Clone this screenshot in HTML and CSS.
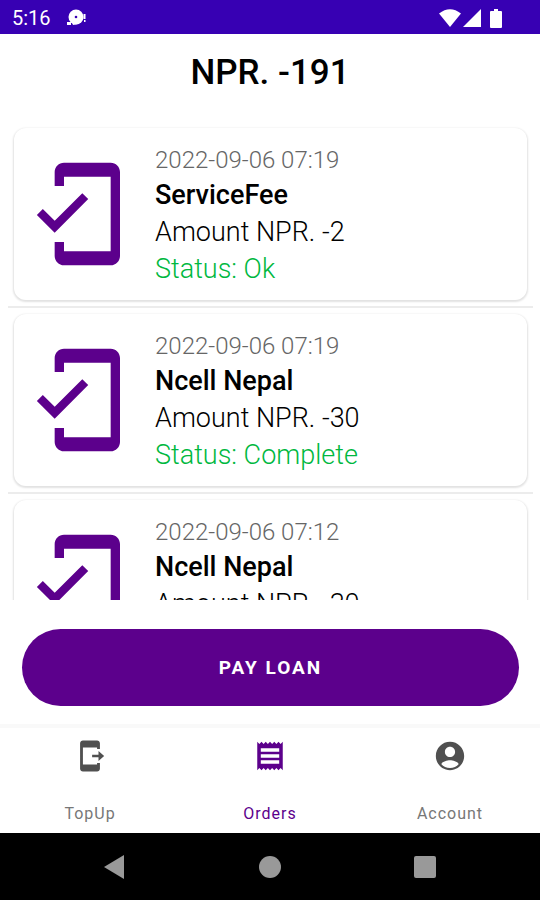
FILE: index.html
```html
<!DOCTYPE html>
<html lang="en">
<head>
<meta charset="utf-8">
<meta name="viewport" content="width=device-width, initial-scale=1">
<title>Orders</title>
<link rel="stylesheet" href="styles.css">
</head>
<body>
<svg class="defs" aria-hidden="true">
  <symbol id="phone-check" viewBox="0 0 24 24"><path d="M19 1H9c-1.100 0-2 .9-2 2v3h2V4h10v16H9v-2H7v3c0 1.100.9 2 2 2h10c1.100 0 2-.9 2-2V3c0-1.100-.9-2-2-2zM7.010 13.470l-2.550-2.550-1.270 1.270L7 16l7.190-7.190-1.270-1.270z"/></symbol>
</svg>
<div class="screen">
  <header class="status-bar">
    <time>5:16</time>
    <svg class="notice" viewBox="0 0 20 18" aria-hidden="true"><circle cx="9" cy="8" r="7.500"/><path d="M0 13h4v3H0zM4 11l2 5 5-1zM16.500 5h2v5h-2zM17 11h1.500v2H17z"/><circle class="eye" cx="9" cy="8" r="1.300"/></svg>
    <div class="signals">
      <svg width="22" height="18" viewBox="0 0 22 18" aria-hidden="true"><path d="M0 4.500Q11-4 22 4.500L11 18z"/></svg>
      <svg width="18" height="18" viewBox="0 0 18 18" aria-hidden="true"><path d="M18 0v18H0z"/></svg>
      <svg width="12" height="19" viewBox="0 0 12 19" aria-hidden="true"><path d="M4 0h4v2h3q1 0 1 1v15q0 1-1 1H1q-1 0-1-1V3q0-1 1-1h3z"/></svg>
    </div>
  </header>
  <h1>NPR. -191</h1>
  <main class="orders">
    <article class="item">
      <div class="card">
        <svg class="phone" aria-hidden="true"><use href="#phone-check"/></svg>
        <div class="info">
          <time>2022-09-06 07:19</time>
          <h2>ServiceFee</h2>
          <p>Amount NPR. -2</p>
          <p class="status">Status: Ok</p>
        </div>
      </div>
    </article>
    <article class="item">
      <div class="card">
        <svg class="phone" aria-hidden="true"><use href="#phone-check"/></svg>
        <div class="info">
          <time>2022-09-06 07:19</time>
          <h2>Ncell Nepal</h2>
          <p>Amount NPR. -30</p>
          <p class="status">Status: Complete</p>
        </div>
      </div>
    </article>
    <article class="item">
      <div class="card">
        <svg class="phone" aria-hidden="true"><use href="#phone-check"/></svg>
        <div class="info">
          <time>2022-09-06 07:12</time>
          <h2>Ncell Nepal</h2>
          <p>Amount NPR. -30</p>
        </div>
      </div>
    </article>
  </main>
  <div class="action"><button class="pay" type="button">PAY LOAN</button></div>
  <nav class="tabs">
    <a href="#topup">
      <svg viewBox="0 0 24 24" aria-hidden="true"><path d="M17 18H7V6h10v1h2V3c0-1.100-.9-2-2-2H7C5.900 1 5 1.900 5 3v18c0 1.100.9 2 2 2h10c1.100 0 2-.9 2-2v-4h-2zM22 12l-4-3.500v2.700h-4.500v1.600H18v2.700z"/></svg>
      TopUp</a>
    <a class="active" href="#orders" aria-current="page">
      <svg viewBox="0 0 24 24" aria-hidden="true"><path d="M18.500 17.500h-13v-2.500h13zM18.500 13.300h-13v-2.600h13zM18.500 9h-13V6.500h13zM3 22l1.500-1.500L6 22l1.500-1.500L9 22l1.500-1.500L12 22l1.500-1.500L15 22l1.500-1.500L18 22l1.500-1.500L21 22V2l-1.500 1.500L18 2l-1.500 1.500L15 2l-1.500 1.500L12 2l-1.500 1.500L9 2 7.500 3.500 6 2 4.500 3.500 3 2z" fill-rule="evenodd"/></svg>
      Orders</a>
    <a href="#account">
      <svg viewBox="0 0 24 24" aria-hidden="true"><path d="M12 2C6.480 2 2 6.480 2 12s4.480 10 10 10 10-4.480 10-10S17.520 2 12 2zm0 3.500c2 0 3.600 1.600 3.600 3.600s-1.600 3.600-3.600 3.600-3.600-1.600-3.600-3.600S10 5.500 12 5.500zM12 20.500c-2.500 0-4.720-1.100-6.200-2.900C6.900 15.900 10 15 12 15s5.100.9 6.200 2.600c-1.480 1.800-3.700 2.900-6.200 2.900z" fill-rule="evenodd"/></svg>
      Account</a>
  </nav>
  <footer class="system">
    <button type="button" aria-label="Back"><svg viewBox="0 0 24 24"><path d="M22 0v24L2 12z"/></svg></button>
    <button type="button" aria-label="Home"><svg viewBox="0 0 24 24"><circle cx="12" cy="12" r="11"/></svg></button>
    <button type="button" aria-label="Recent apps"><svg viewBox="0 0 24 24"><rect x="0" y="1" width="22" height="22" rx="2"/></svg></button>
  </footer>
</div>
</body>
</html>
```
FILE: styles.css
```css
* { box-sizing: border-box; }
body, h1, h2, p { margin: 0; }
body { background: #fff; color: #000; font-family: Roboto, "Liberation Sans", sans-serif; }
svg { display: block; fill: currentColor; }
.defs { position: absolute; width: 0; height: 0; }
.screen { display: flex; flex-direction: column; height: 100vh; overflow: hidden; }

.status-bar {
  display: flex; align-items: center; flex: none; height: 34px; padding: 2px 38px 0 12px;
  background: #3700b3; color: #fff; font-size: 20px;
}
.notice { width: 20px; height: 18px; margin-left: 16px; }
.eye { fill: #3700b3; }
.signals { display: flex; align-items: center; gap: 2px; margin-left: auto; }
.signals svg:last-child { margin-left: 7px; }

h1 {
  flex: none; height: 88px; padding-top: 19px;
  font-size: 35px; line-height: 40px; font-weight: 500; text-align: center;
}

.orders { flex: 1; min-height: 0; overflow: hidden; padding: 0 7px 0 8px; }
.item { padding: 6px; border-bottom: 2px solid #ececec; }
.card {
  display: flex; align-items: flex-start; gap: 21px; height: 172px; padding: 0 8px;
  border-radius: 12px; box-shadow: 0 1px 2px 1px #e2e2e2;
}
.phone { flex: none; width: 112px; height: 112px; margin-top: 30px; color: #5c008c; }
.info { display: flex; flex-direction: column; padding-top: 15px; font-size: 27px; line-height: 37px; font-weight: 300; }
.info time { color: #666; font-size: 24px; line-height: 34px; }
.info h2 { font-size: 27px; font-weight: 500; line-height: 37px; }
.info .status { color: #00b840; }

.action { flex: none; padding: 29px 21px 18px 22px; }
.pay {
  display: block; width: 100%; height: 77px; border: 0; border-radius: 39px;
  background: #5c008c; color: #fff; font: 700 19px Roboto, sans-serif; letter-spacing: 2px;
}

.tabs { display: flex; flex: none; height: 109px; border-top: 4px solid #f9f9f9; }
.tabs a {
  display: flex; flex: 1; flex-direction: column; align-items: center; gap: 31px; padding-top: 11px;
  color: #777; font-size: 16px; line-height: 20px; letter-spacing: 1px; text-decoration: none;
}
.tabs svg { width: 34px; height: 34px; color: #505050; }
.tabs .active, .tabs .active svg { color: #5c008c; }

.system { display: flex; flex: none; justify-content: center; gap: 132px; height: 67px; background: #000; }
.system button { display: flex; align-items: center; padding: 0; border: 0; background: none; color: #999; }
.system svg { width: 24px; height: 24px; }
```
